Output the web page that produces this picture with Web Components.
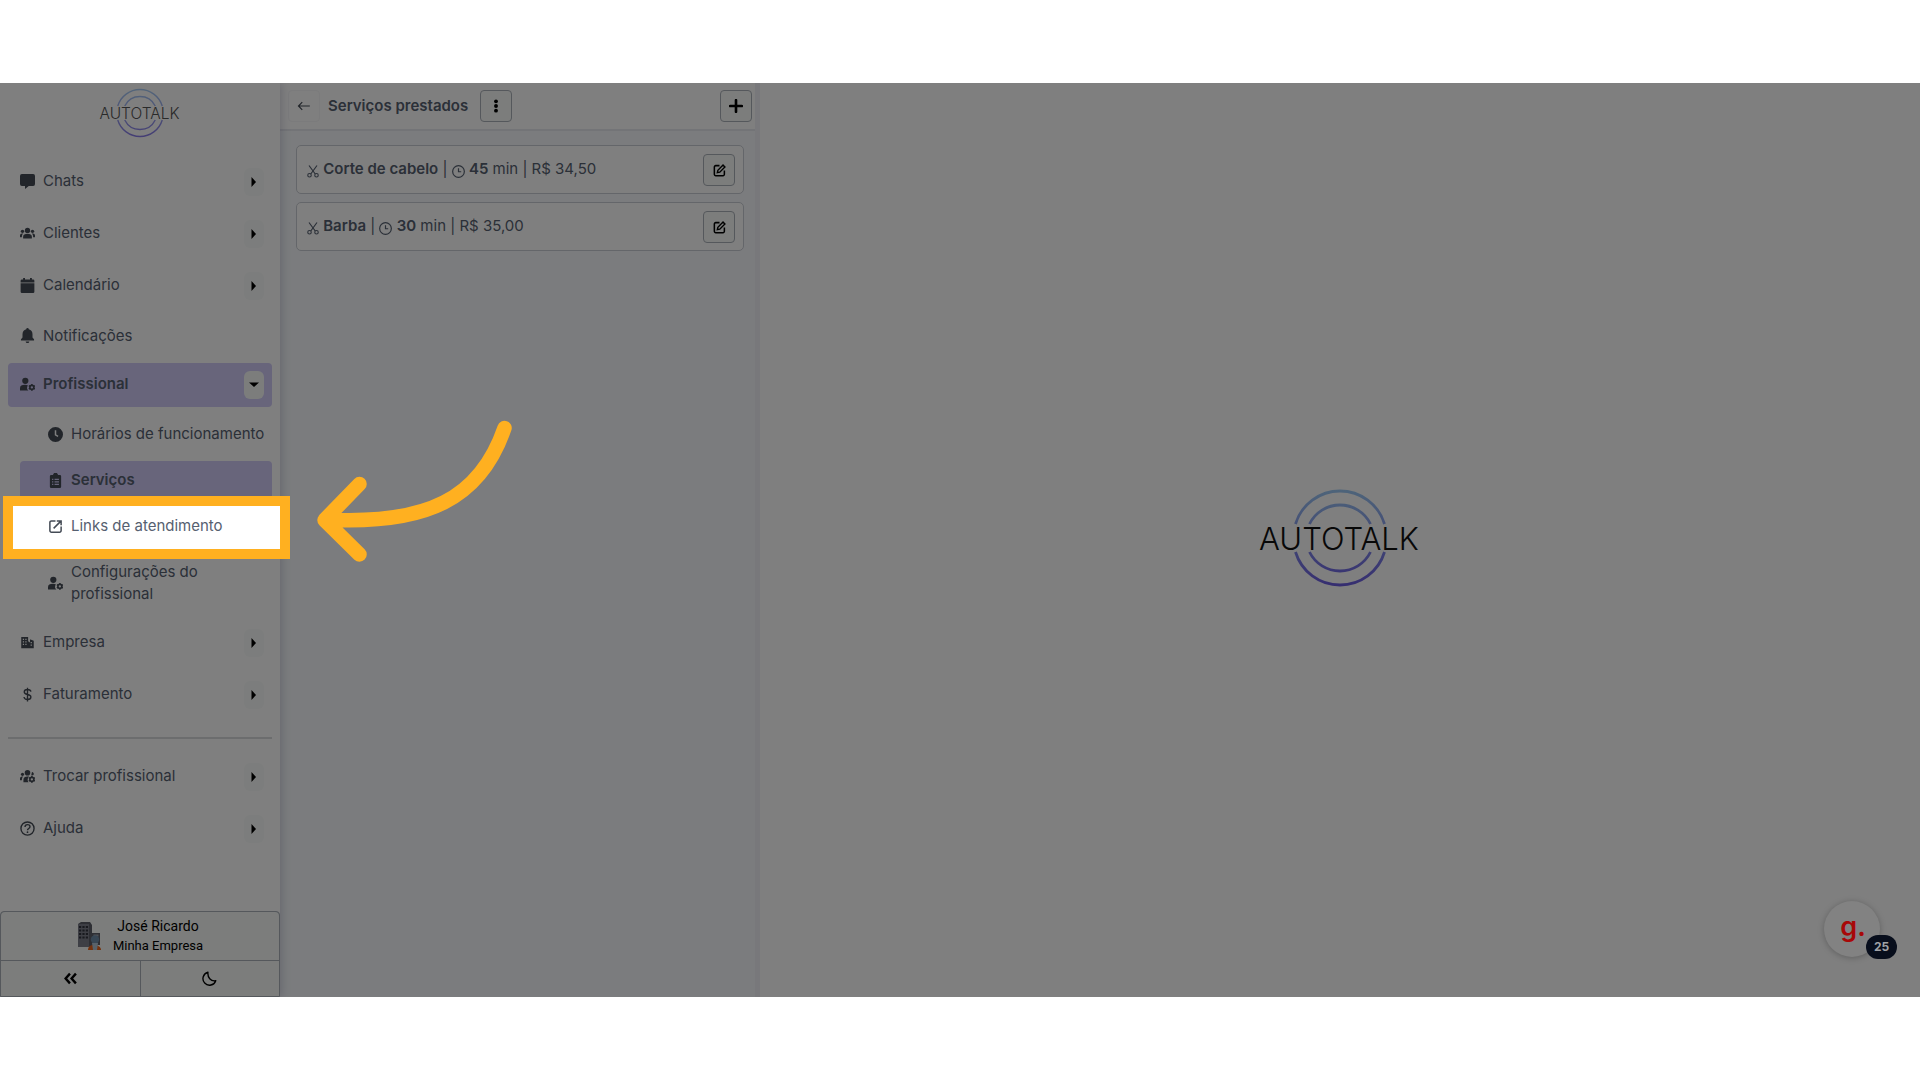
<!DOCTYPE html>
<html lang="pt-BR">
<head>
<meta charset="utf-8">
<title>Autotalk - Serviços</title>
<style>
    body{
        margin: 0;
        min-height: 100vh;
        box-sizing: border-box;
        padding: 83px 0;
        display: flex;
        background-color: #fff;
        font-family: Inter, "Liberation Sans", sans-serif;
        font-size: 15px;
        line-height: 22px;
        color: #566070;
        --icon-color: #444b55;
        --border-color: #c9ccd4;
        --button-border: #aab0b8;
        --button-color: #f8fbf9;
        --active-color: #d0caf7;
        --highlight-color: #ffb020;
    }
</style>
</head>
<body>
<app-layout>
    <side-menu slot="menu">
        <menu-item icon="chat" expandable>Chats</menu-item>
        <menu-item icon="group" expandable>Clientes</menu-item>
        <menu-item icon="calendar" expandable>Calendário</menu-item>
        <menu-item icon="bell">Notificações</menu-item>
        <menu-item icon="usercog" expandable open active>Profissional</menu-item>
        <menu-item icon="clock" sub>Horários de funcionamento</menu-item>
        <menu-item icon="clipboard" sub active>Serviços</menu-item>
        <menu-item icon="external" sub>Links de atendimento</menu-item>
        <menu-item icon="usercog" sub>Configurações do profissional</menu-item>
        <menu-item icon="building" expandable>Empresa</menu-item>
        <menu-item icon="dollar" expandable>Faturamento</menu-item>
        <menu-divider></menu-divider>
        <menu-item icon="groupcog" expandable>Trocar profissional</menu-item>
        <menu-item icon="help" expandable>Ajuda</menu-item>
        <profile-box slot="footer">
            <span slot="name">José Ricardo</span>
            <span slot="company">Minha Empresa</span>
        </profile-box>
    </side-menu>
    <service-panel slot="list">
        <span slot="title">Serviços prestados</span>
        <service-card minutes="45" price="R$ 34,50">Corte de cabelo</service-card>
        <service-card minutes="30" price="R$ 35,00">Barba</service-card>
    </service-panel>
    <app-logo slot="main" size="160"></app-logo>
    <tour-highlight slot="tour"></tour-highlight>
    <guide-badge slot="tour">25</guide-badge>
</app-layout>

<script>
/* icons, all on a 24x24 box */
const ICONS = {
    chat: '<path d="M3 0h18a3 3 0 0 1 3 3v13a3 3 0 0 1-3 3h-7l-6 5v-5H3a3 3 0 0 1-3-3V3a3 3 0 0 1 3-3z"/>',
    group: '<circle cx="12" cy="7" r="4.2"/><circle cx="4" cy="8.500" r="2.700"/><circle cx="20" cy="8.500" r="2.700"/><path d="M5 20v-3c0-3 3-4.500 7-4.500s7 1.500 7 4.500v3zM0 18v-3c0-2 2-3 5-3-1.500 1.500-2 3-2 6zM24 18v-3c0-2-2-3-5-3 1.500 1.500 2 3 2 6z"/>',
    calendar: '<path d="M5 0h3v2.500h8V0h3v2.500h2a2 2 0 0 1 2 2V7H1V4.500a2 2 0 0 1 2-2h2zM1 8.500h22V22a2 2 0 0 1-2 2H3a2 2 0 0 1-2-2z"/>',
    bell: '<path d="M12 0a2 2 0 0 1 2 2c4 1 6 4 6 8v5l2.500 3v2h-21v-2L4 15v-5c0-4 2-7 6-8a2 2 0 0 1 2-2zM9 21.500h6a3 2.500 0 0 1-6 0z"/>',
    usercog: '<circle cx="8.500" cy="6" r="5"/><path d="M0 21.500V18c0-4 3-5.500 8-5.500 2 0 3.500.3 4.700.9A6 6 0 0 0 13.500 21.500z"/><circle cx="19" cy="16.500" r="3.200" fill="none" stroke="currentColor" stroke-width="2.600"/><path d="M19 11v2.500M19 19.500V22M14.200 13.800l2 1.200M21.700 18l2 1.200M14.200 19.200l2-1.200M21.700 15l2-1.200" stroke="currentColor" stroke-width="2.400"/>',
    groupcog: '<circle cx="12" cy="6" r="4.500"/><circle cx="4" cy="8.500" r="2.500"/><path d="M19 5a2.700 2.700 0 1 1-1 5zM5.500 21v-4c0-3 2.500-5 6.500-5 1 0 2 .1 2.600.4a6 6 0 0 0-1 8.600zM0 18v-3c0-2 2-3 5-3-1.500 1.500-2 3.500-2 6z"/><circle cx="19" cy="16.500" r="3.200" fill="none" stroke="currentColor" stroke-width="2.600"/><path d="M19 11v2.500M19 19.500V22M14.200 13.800l2 1.200M21.700 18l2 1.200M14.200 19.200l2-1.200M21.700 15l2-1.200" stroke="currentColor" stroke-width="2.400"/>',
    clock: '<path fill-rule="evenodd" d="M12 0a12 12 0 1 1 0 24 12 12 0 0 1 0-24zM10.800 5v8l4.700 3 1.200-1.900-3.500-2.200V5z"/>',
    clipboard: '<path fill-rule="evenodd" d="M8 2h1a3 3 0 0 1 6 0h1v1h3a2 2 0 0 1 2 2v17a2 2 0 0 1-2 2H5a2 2 0 0 1-2-2V5a2 2 0 0 1 2-2h3zM6.500 9v2h2V9zm4 0v2h7V9zm-4 4v2h2v-2zm4 0v2h7v-2zm-4 4v2h2v-2zm4 0v2h7v-2z"/>',
    external: '<path d="M12 3H5.500A2.500 2.500 0 0 0 3 5.500v13A2.500 2.500 0 0 0 5.500 21h13a2.500 2.500 0 0 0 2.500-2.500V12M14 3h7v7M21 3L9 15" fill="none" stroke="currentColor" stroke-width="2.400"/>',
    building: '<path fill-rule="evenodd" d="M2 3h11v7l3 2V7h1l5 2v12H2zM4.500 6v2h2V6zm4 0v2h2V6zm-4 4v2h2v-2zm4 0v2h2v-2zm-4 4v2h2v-2zm4 0v2h2v-2zM17 11v2h2v-2zm0 4v2h2v-2z"/>',
    dollar: '<path d="M17.500 7.500C17 5 15 4 12 4S6.800 5.300 6.800 8c0 5.500 10.600 2.500 10.600 8 0 2.700-2.400 4-5.400 4s-5.200-1.300-5.600-4M12 1v22" fill="none" stroke="currentColor" stroke-width="2.200"/>',
    help: '<circle cx="12" cy="12" r="10.500" fill="none" stroke="currentColor" stroke-width="2.200"/><path d="M8 9.500C8 7 9.700 5.800 12 5.800s4 1.300 4 3.400c0 2.800-4 2.900-4 5.600" fill="none" stroke="currentColor" stroke-width="2.200"/><circle cx="12" cy="17.800" r="1.400"/>',
    back: '<path d="M22 12H3M9 5.500L2.500 12 9 18.500" fill="none" stroke="currentColor" stroke-width="2"/>',
    dots: '<circle cx="12" cy="4" r="3.300"/><circle cx="12" cy="12" r="3.300"/><circle cx="12" cy="20" r="3.300"/>',
    plus: '<path d="M12 2v20M2 12h20" stroke="currentColor" stroke-width="4.500" stroke-linecap="round"/>',
    scissors: '<path d="M4 0l12.500 17M20 0L7.500 17" fill="none" stroke="currentColor" stroke-width="2.400"/><circle cx="5" cy="19.500" r="3.500" fill="none" stroke="currentColor" stroke-width="2.200"/><circle cx="19" cy="19.500" r="3.500" fill="none" stroke="currentColor" stroke-width="2.200"/>',
    time: '<circle cx="12" cy="12" r="10.800" fill="none" stroke="currentColor" stroke-width="2.200"/><path d="M12 6v6.500h5" fill="none" stroke="currentColor" stroke-width="2.200"/>',
    edit: '<path d="M12 3H5a2.500 2.500 0 0 0-2.500 2.500V19A2.500 2.500 0 0 0 5 21.500h13.500A2.500 2.500 0 0 0 21 19v-7" fill="none" stroke="currentColor" stroke-width="2.800"/><path d="M8 16l1-4.500L18.500 2 22 5.500 12.500 15z" fill="none" stroke="currentColor" stroke-width="2.600"/>',
    collapse: '<path d="M11 3l-8 9 8 9M22 3l-8 9 8 9" fill="none" stroke="currentColor" stroke-width="4.400"/>',
    moon: '<path d="M9.500 2A10.500 10.500 0 1 0 22 15.500C14 17 8.500 10 9.500 2z" fill="none" stroke="currentColor" stroke-width="2.200" stroke-linejoin="round"/>'
};

function icon(name, size){
    return `<svg width="${size}" height="${size}" viewBox="0 0 24 24" fill="currentColor" aria-hidden="true">${ICONS[name]}</svg>`;
}

class AppLayout extends HTMLElement {
    constructor(){
        super();
        let shadowRoot = this.attachShadow({mode: 'open'});
        shadowRoot.innerHTML = `
            <style>
                :host{
                    flex: 1;
                    display: flex;
                    position: relative;
                    overflow: hidden;
                    background-color: #fff;
                }
                .splitter{
                    flex: none;
                    width: 5px;
                    background-color: #f0f0f6;
                }
                main{
                    flex: 1;
                    display: flex;
                    align-items: center;
                    justify-content: center;
                }
            </style>
            <slot name="menu"></slot>
            <slot name="list"></slot>
            <div class="splitter"></div>
            <main><slot name="main"></slot></main>
            <slot name="tour"></slot>`;
    }
}

class AppLogo extends HTMLElement {
    constructor(){
        super();
        let size = this.getAttribute("size");
        let shadowRoot = this.attachShadow({mode: 'open'});
        shadowRoot.innerHTML = `
            <style>
                :host{
                    display: block;
                    color: var(--logo-text, #111);
                }
                svg{
                    display: block;
                    overflow: visible;
                }
                text{
                    font-family: Inter, sans-serif;
                    font-weight: 300;
                    font-size: 31px;
                }
            </style>
            <svg width="${size}" viewBox="0 0 160 100" role="img" aria-label="Autotalk">
                <defs>
                    <linearGradient id="ring" x1="0" y1="0" x2="0" y2="100" gradientUnits="userSpaceOnUse">
                        <stop offset="0" stop-color="var(--logo-top, #9cc8f4)"/>
                        <stop offset="1" stop-color="var(--logo-bottom, #6a58e0)"/>
                    </linearGradient>
                </defs>
                <g fill="none" stroke="url(#ring)" stroke-width="2.800">
                    <path d="M35.500 34A46.500 46.500 0 0 1 124.500 34M49.500 34A34 34 0 0 1 110.500 34"/>
                    <path d="M35.500 62A46.500 46.500 0 0 0 124.500 62M49.500 62A34 34 0 0 0 110.500 62"/>
                </g>
                <text x="79" y="60" text-anchor="middle" fill="currentColor">AUTOTALK</text>
            </svg>`;
    }
}

class SideMenu extends HTMLElement {
    constructor(){
        super();
        let shadowRoot = this.attachShadow({mode: 'open'});
        shadowRoot.innerHTML = `
            <style>
                :host{
                    flex: none;
                    width: 280px;
                    display: flex;
                    flex-direction: column;
                    background-color: #fff;
                    box-shadow: 0 0 10px rgba(60, 60, 110, 0.3);
                    z-index: 1;
                }
                header{
                    display: flex;
                    justify-content: center;
                    padding: 6px 0 21px;
                    --logo-text: #555;
                    --logo-top: #a8ccf4;
                    --logo-bottom: #8878e8;
                }
                nav{
                    flex: 1;
                    display: flex;
                    flex-direction: column;
                    gap: 8px;
                    padding: 0 8px;
                }
            </style>
            <header><app-logo size="80"></app-logo></header>
            <nav><slot></slot></nav>
            <slot name="footer"></slot>`;
    }
}

class MenuItem extends HTMLElement {
    constructor(){
        super();
        let toggle = "";
        if(this.hasAttribute("expandable")){
            toggle = `<button aria-label="Expandir"><svg width="6" height="10" viewBox="0 0 6 10"><path d="M0.500 0L5 5L0.500 10z"/></svg></button>`;
        }
        let shadowRoot = this.attachShadow({mode: 'open'});
        shadowRoot.innerHTML = `
            <style>
                :host{
                    display: flex;
                    align-items: center;
                    box-sizing: border-box;
                    min-height: 39px;
                    padding: 8px 8px 8px 12px;
                    border-radius: 4px;
                }
                :host([sub]){
                    min-height: 38px;
                    margin-left: 12px;
                    padding-left: 28px;
                    padding-right: 0;
                }
                :host([active]){
                    background-color: var(--active-color);
                    font-weight: 600;
                }
                a{
                    flex: 1;
                    display: flex;
                    align-items: center;
                    gap: 8px;
                    color: inherit;
                    text-decoration: none;
                }
                :host([expandable]) a{
                    padding-bottom: 2px;
                }
                a svg{
                    flex: none;
                    color: var(--icon-color);
                }
                button{
                    flex: none;
                    display: flex;
                    align-items: center;
                    justify-content: center;
                    width: 20px;
                    height: 28px;
                    padding: 0;
                    border: 0;
                    border-radius: 6px;
                    background-color: #f9fbfa;
                }
                :host([open]) button{
                    background-color: var(--button-color);
                }
                :host([open]) button svg{
                    transform: rotate(90deg);
                }
            </style>
            <a href="#">${icon(this.getAttribute("icon"), 15)}<span><slot></slot></span></a>${toggle}`;
    }
}

class MenuDivider extends HTMLElement {
    constructor(){
        super();
        let shadowRoot = this.attachShadow({mode: 'open'});
        shadowRoot.innerHTML = `
            <style>
                :host{
                    display: block;
                    padding: 12px 0 8px;
                }
                hr{
                    margin: 0;
                    border: 0;
                    border-top: 2px solid #d8dadd;
                }
            </style>
            <hr>`;
    }
}

class ProfileBox extends HTMLElement {
    constructor(){
        super();
        let shadowRoot = this.attachShadow({mode: 'open'});
        shadowRoot.innerHTML = `
            <style>
                :host{
                    display: block;
                    font-family: Roboto, sans-serif;
                    color: #000;
                    background-color: var(--button-border);
                    border: 1px solid var(--button-border);
                    border-radius: 4px 4px 0 0;
                }
                button{
                    display: flex;
                    align-items: center;
                    justify-content: center;
                    font: inherit;
                    color: inherit;
                    padding: 0;
                    border: 0;
                    background-color: var(--button-color);
                }
                .profile{
                    width: 100%;
                    height: 48px;
                    gap: 12px;
                    border-radius: 4px 4px 0 0;
                }
                .names{
                    display: flex;
                    flex-direction: column;
                    line-height: 19px;
                    font-size: 14px;
                }
                .company{
                    font-size: 13px;
                }
                .actions{
                    display: flex;
                    gap: 1px;
                    padding-top: 1px;
                }
                .actions button{
                    flex: 1;
                    height: 35px;
                }
            </style>
            <button class="profile">
                <svg width="24" height="30" viewBox="0 0 24 30" aria-hidden="true">
                    <path d="M1 3l3-2h9l2 3v21l-3 1H1z" fill="#5c5e68"/>
                    <path d="M1 3h11v23H1z" fill="#7c7f8a"/>
                    <path d="M2 6h9M2 9.500h9M2 13h9M2 16.500h9" stroke="#33353f" stroke-width="2.200" stroke-dasharray="2.200 1.200"/>
                    <path d="M15 12h8v12h-8z" fill="#5c5e68"/>
                    <path d="M16.500 14.500h5" stroke="#a0a4ae" stroke-width="2"/>
                    <path d="M11 29c0-3 2-5 6-5s7 2 7 5z" fill="#e8641c"/>
                    <circle cx="18" cy="18.500" r="4.200" fill="#6f8da8"/>
                    <path d="M15 22h6l-1 7h-4z" fill="#b0c4d4"/>
                </svg>
                <span class="names">
                    <slot name="name"></slot>
                    <span class="company"><slot name="company"></slot></span>
                </span>
            </button>
            <div class="actions">
                <button aria-label="Recolher menu">${icon("collapse", 13)}</button>
                <button aria-label="Modo escuro">${icon("moon", 15)}</button>
            </div>`;
    }
}

class ServicePanel extends HTMLElement {
    constructor(){
        super();
        let shadowRoot = this.attachShadow({mode: 'open'});
        shadowRoot.innerHTML = `
            <style>
                :host{
                    flex: none;
                    width: 475px;
                    background-color: #f6f9fc;
                }
                header{
                    display: flex;
                    align-items: center;
                    gap: 8px;
                    padding: 7px 3px 7px 8px;
                    background-color: #fff;
                    border-bottom: 2px solid #e6e8ee;
                }
                h1{
                    margin: 0;
                    padding-right: 4px;
                    font-size: 15px;
                    font-weight: 600;
                }
                .list{
                    display: flex;
                    flex-direction: column;
                    gap: 8px;
                    padding: 14px 11px 14px 16px;
                }
                icon-button:last-child{
                    margin-left: auto;
                }
            </style>
            <header>
                <icon-button icon="back" size="14" label="Voltar" plain></icon-button>
                <h1><slot name="title"></slot></h1>
                <icon-button icon="dots" size="14" label="Mais opções"></icon-button>
                <icon-button icon="plus" size="14" label="Adicionar"></icon-button>
            </header>
            <div class="list"><slot></slot></div>`;
    }
}

class IconButton extends HTMLElement {
    constructor(){
        super();
        let shadowRoot = this.attachShadow({mode: 'open'});
        shadowRoot.innerHTML = `
            <style>
                :host{
                    display: block;
                    flex: none;
                }
                button{
                    display: flex;
                    align-items: center;
                    justify-content: center;
                    width: 32px;
                    height: 32px;
                    padding: 0;
                    color: #000;
                    border: 1px solid var(--button-border);
                    border-radius: 4px;
                    background-color: var(--button-color);
                }
                :host([plain]) button{
                    color: var(--icon-color);
                    border-color: #f6f6f8;
                    background-color: transparent;
                }
            </style>
            <button aria-label="${this.getAttribute("label")}">${icon(this.getAttribute("icon"), this.getAttribute("size"))}</button>`;
    }
}

class ServiceCard extends HTMLElement {
    constructor(){
        super();
        let shadowRoot = this.attachShadow({mode: 'open'});
        shadowRoot.innerHTML = `
            <style>
                :host{
                    display: flex;
                    align-items: center;
                    justify-content: space-between;
                    padding: 8px 8px 7px 10px;
                    background-color: #fff;
                    border: 1px solid var(--border-color);
                    border-radius: 5px;
                }
                span{
                    padding-bottom: 2px;
                }
                b{
                    font-weight: 600;
                }
                svg{
                    vertical-align: -4px;
                }
                svg:first-child{
                    width: 12px;
                    height: 15px;
                }
            </style>
            <span><svg viewBox="0 0 24 30" fill="currentColor" aria-hidden="true"><g transform="translate(0 5)">${ICONS.scissors}</g></svg> <b><slot></slot></b> | ${icon("time", 13)} <b>${this.getAttribute("minutes")}</b> min | ${this.getAttribute("price")}</span>
            <icon-button icon="edit" size="13" label="Editar"></icon-button>`;
    }
}

/* dims everything except the framed menu entry */
class TourHighlight extends HTMLElement {
    constructor(){
        super();
        let shadowRoot = this.attachShadow({mode: 'open'});
        shadowRoot.innerHTML = `
            <style>
                :host{
                    position: absolute;
                    z-index: 2;
                    left: 3px;
                    top: 413px;
                    width: 267px;
                    height: 43px;
                    border: 10px solid var(--highlight-color);
                    box-shadow: 0 0 0 4000px rgba(0, 0, 0, 0.5);
                    pointer-events: none;
                }
                svg{
                    position: absolute;
                    left: 304px;
                    top: -86px;
                    overflow: visible;
                }
            </style>
            <svg width="195" height="142" viewBox="317 420 195 142" aria-hidden="true">
                <path d="M504.500 428C480 499 427 525 325 519.500M359.500 484L324.500 520L359.500 554.500" fill="none" stroke="var(--highlight-color)" stroke-width="14.500" stroke-linecap="round" stroke-linejoin="round"/>
            </svg>`;
    }
}

class GuideBadge extends HTMLElement {
    constructor(){
        super();
        let shadowRoot = this.attachShadow({mode: 'open'});
        shadowRoot.innerHTML = `
            <style>
                :host{
                    position: absolute;
                    z-index: 3;
                    right: 40px;
                    bottom: 40px;
                }
                button{
                    width: 56px;
                    height: 56px;
                    padding: 0 0 6px 2px;
                    border: 0;
                    border-radius: 50%;
                    background-color: #828282;
                    box-shadow: 0 1px 6px rgba(0, 0, 0, 0.25);
                    font-family: Inter, sans-serif;
                    font-size: 27px;
                    font-weight: 600;
                    color: #a80808;
                }
                .count{
                    position: absolute;
                    right: -17px;
                    bottom: -2px;
                    width: 31px;
                    line-height: 24px;
                    border-radius: 12px;
                    background-color: #080e1c;
                    color: #a0a2a6;
                    font-size: 12px;
                    font-weight: 700;
                    text-align: center;
                }
            </style>
            <button>g.</button>
            <span class="count"><slot></slot></span>`;
    }
}

customElements.define('app-layout', AppLayout);
customElements.define('app-logo', AppLogo);
customElements.define('side-menu', SideMenu);
customElements.define('menu-item', MenuItem);
customElements.define('menu-divider', MenuDivider);
customElements.define('profile-box', ProfileBox);
customElements.define('service-panel', ServicePanel);
customElements.define('icon-button', IconButton);
customElements.define('service-card', ServiceCard);
customElements.define('tour-highlight', TourHighlight);
customElements.define('guide-badge', GuideBadge);
</script>
</body>
</html>
